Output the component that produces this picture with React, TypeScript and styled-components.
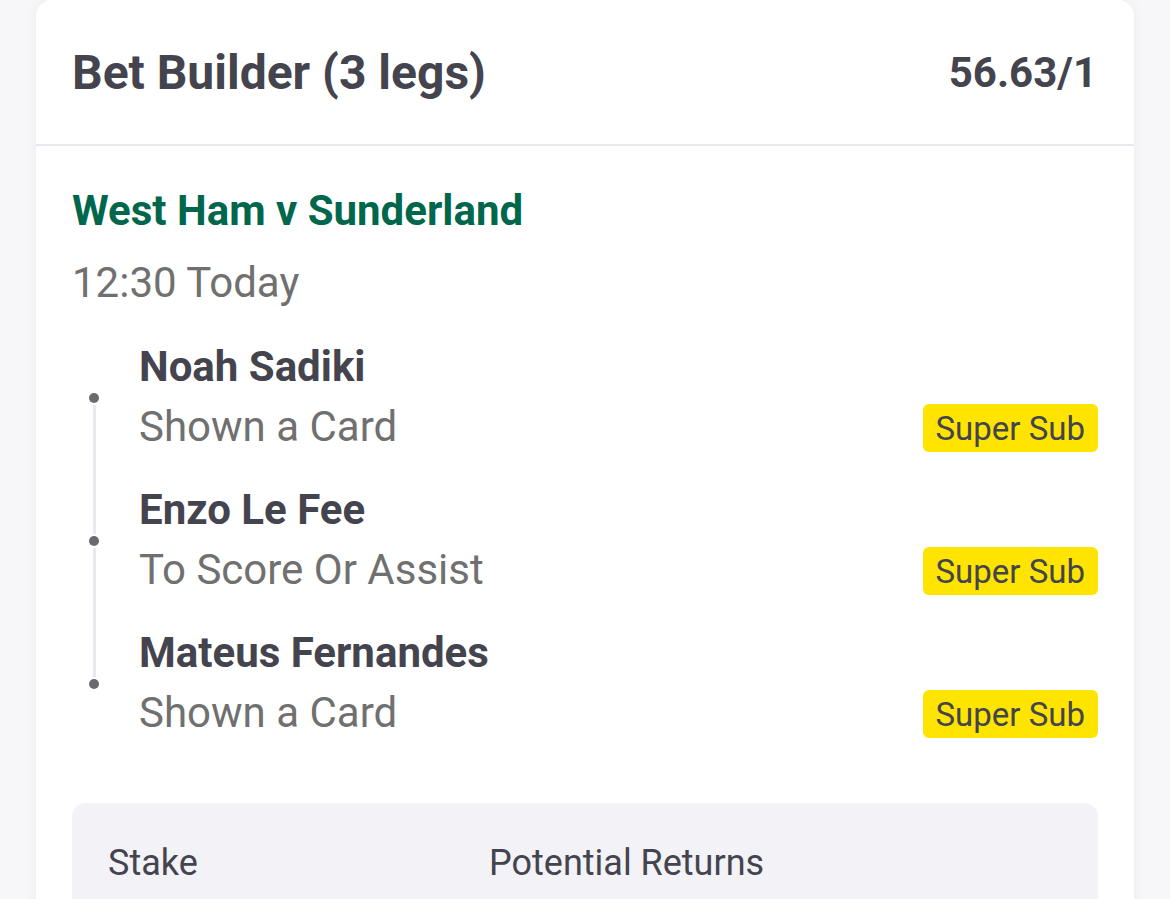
import React from "react";
import styled, { createGlobalStyle } from "styled-components";

const Global = createGlobalStyle`
  html, body { margin: 0; padding: 0; background: #f7f7f9; }
  body { font-family: Roboto, "Noto Sans", Arial, sans-serif; -webkit-font-smoothing: antialiased; }
  * { box-sizing: border-box; }
`;

const Page = styled.div`
  width: 1170px;
  height: 899px;
  overflow: hidden;
  padding: 0 36px;
`;

const Card = styled.div`
  background: #ffffff;
  border-radius: 16px;
  box-shadow: 0 0 14px rgba(0, 0, 0, 0.05);
  min-height: 920px;
`;

const Header = styled.div`
  display: flex;
  align-items: center;
  justify-content: space-between;
  height: 146px;
  padding: 0 37px 0 36px;
  border-bottom: 2px solid #e8e8ee;
`;

const Title = styled.h1`
  margin: 0;
  font-size: 48px;
  font-weight: 700;
  color: #44444f;
  letter-spacing: 0;
`;

const Odds = styled.div`
  font-size: 42px;
  font-weight: 700;
  color: #44444f;
`;

const Body = styled.div`
  padding: 36px 36px 0;
`;

const EventName = styled.div`
  font-size: 42px;
  line-height: 58px;
  font-weight: 700;
  color: #00674d;
`;

const EventTime = styled.div`
  font-size: 42px;
  line-height: 58px;
  color: #707070;
  margin-top: 14px;
`;

const Legs = styled.div`
  position: relative;
  margin-top: 26px;
  padding-left: 67px;
  display: flex;
  flex-direction: column;
  gap: 25px;
`;

const TimelineLine = styled.div`
  position: absolute;
  left: 21px;
  top: 58px;
  bottom: 58px;
  width: 3px;
  background: #e8e8ee;
`;

const Leg = styled.div`
  position: relative;
  display: grid;
  grid-template-columns: 1fr auto;
  grid-template-rows: 60px 58px;
`;

const Dot = styled.span`
  position: absolute;
  left: -50px;
  top: 55px;
  width: 10px;
  height: 10px;
  border-radius: 50%;
  background: #6b6b6f;
  box-shadow: 0 0 0 2px #ffffff;
`;

const PlayerName = styled.div`
  grid-column: 1 / 3;
  font-size: 42px;
  line-height: 58px;
  font-weight: 700;
  color: #44444f;
`;

const Selection = styled.div`
  font-size: 42px;
  line-height: 58px;
  color: #707070;
`;

const Badge = styled.span`
  align-self: center;
  justify-self: end;
  margin-top: 2px;
  height: 48px;
  display: flex;
  align-items: center;
  padding: 0 13px;
  background: #ffe400;
  border-radius: 6px;
  font-size: 33px;
  color: #44444f;
`;

const StakeBox = styled.div`
  margin-top: 61px;
  background: #f2f2f7;
  border-radius: 14px;
  height: 200px;
  padding: 38px 36px 0;
  display: grid;
  grid-template-columns: 381px 1fr;
`;

const StakeLabel = styled.div`
  font-size: 36px;
  line-height: 44px;
  color: #44444f;
`;

const legs = [
  { name: "Noah Sadiki", market: "Shown a Card" },
  { name: "Enzo Le Fee", market: "To Score Or Assist" },
  { name: "Mateus Fernandes", market: "Shown a Card" },
];

export default function App() {
  return (
    <>
      <Global />
      <Page>
        <Card>
          <Header>
            <Title>Bet Builder (3 legs)</Title>
            <Odds>56.63/1</Odds>
          </Header>
          <Body>
            <EventName>West Ham v Sunderland</EventName>
            <EventTime>12:30 Today</EventTime>
            <Legs>
              <TimelineLine />
              {legs.map((l) => (
                <Leg key={l.name}>
                  <Dot />
                  <PlayerName>{l.name}</PlayerName>
                  <Selection>{l.market}</Selection>
                  <Badge>Super Sub</Badge>
                </Leg>
              ))}
            </Legs>
            <StakeBox>
              <StakeLabel>Stake</StakeLabel>
              <StakeLabel>Potential Returns</StakeLabel>
            </StakeBox>
          </Body>
        </Card>
      </Page>
    </>
  );
}
